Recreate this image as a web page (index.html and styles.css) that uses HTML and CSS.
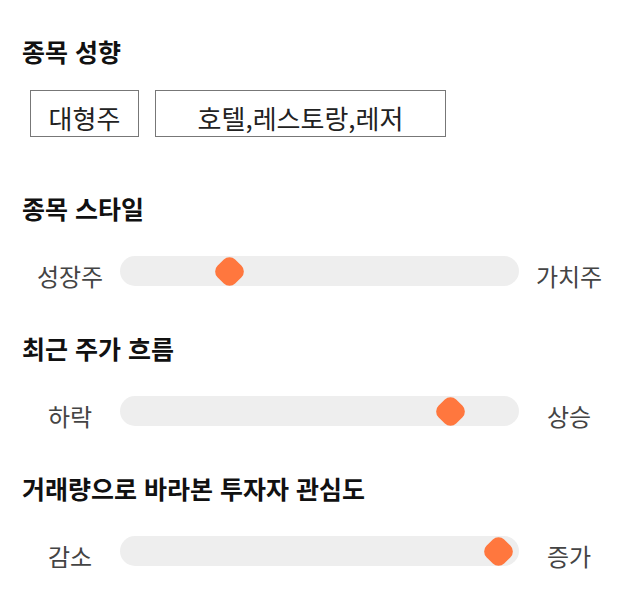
FILE: index.html
```html
<!DOCTYPE html>
<html lang="ko">
<head>
<meta charset="utf-8">
<link rel="stylesheet" href="styles.css">
</head>
<body>
<div class="page">
  <h2 class="title first">종목 성향</h2>
  <div class="chips">
    <span class="chip chip-a">대형주</span>
    <span class="chip chip-b">호텔,레스토랑,레저</span>
  </div>

  <h2 class="title after-chips">종목 스타일</h2>
  <div class="slider-row">
    <span class="label">성장주</span>
    <div class="track"><span class="thumb" style="left:27.5%"></span></div>
    <span class="label">가치주</span>
  </div>

  <h2 class="title">최근 주가 흐름</h2>
  <div class="slider-row">
    <span class="label">하락</span>
    <div class="track"><span class="thumb" style="left:82.75%"></span></div>
    <span class="label">상승</span>
  </div>

  <h2 class="title">거래량으로 바라본 투자자 관심도</h2>
  <div class="slider-row">
    <span class="label">감소</span>
    <div class="track"><span class="thumb" style="left:94.75%"></span></div>
    <span class="label">증가</span>
  </div>
</div>
</body>
</html>
```
FILE: styles.css
```css
html, body {
  margin: 0;
  padding: 0;
  background: #ffffff;
}
body {
  font-family: "Noto Sans CJK KR", "Noto Sans", sans-serif;
  color: #222;
}
.page {
  padding: 36px 20px 0 22px;
}
.title {
  margin: 42px 0 0 0;
  font-size: 25px;
  line-height: 30px;
  font-weight: 700;
  color: #111;
}
.title.first {
  margin-top: 0;
}
.title.after-chips {
  margin-top: 56px;
}
.chips {
  display: flex;
  gap: 16px;
  margin-top: 24px;
  padding-left: 8px;
}
.chip {
  box-sizing: border-box;
  height: 47px;
  border: 1px solid #777;
  font-size: 26px;
  line-height: 30px;
  padding-top: 12px;
  text-align: center;
  color: #222;
}
.chip-a { width: 109px; }
.chip-b { width: 291px; }
.slider-row {
  display: flex;
  align-items: flex-start;
  margin-top: 33px;
  margin-left: -2px;
}
.label {
  width: 100px;
  text-align: center;
  font-size: 24px;
  line-height: 30px;
  margin-top: 5px;
  color: #444;
}
.track {
  position: relative;
  width: 399px;
  height: 30px;
  border-radius: 15px;
  background: #eeeeee;
}
.thumb {
  position: absolute;
  top: 2.5px;
  width: 25px;
  height: 25px;
  margin-left: -12.5px;
  border-radius: 8px;
  background: #ff773e;
  transform: rotate(45deg);
}
```
